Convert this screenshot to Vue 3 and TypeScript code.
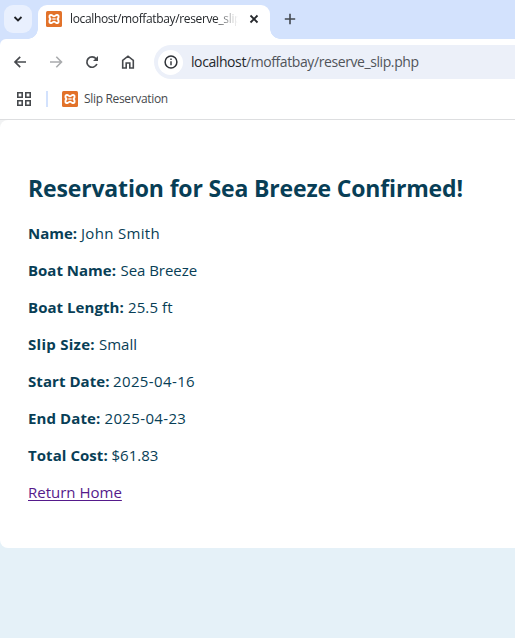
<script setup lang="ts">
interface Detail {
  label: string
  value: string
  labelWidth: number
  labelTracking: number
  valueTracking: number
}

const details: Detail[] = [
  { label: 'Name:', value: 'John Smith', labelWidth: 53, labelTracking: 0, valueTracking: 0.32 },
  { label: 'Boat Name:', value: 'Sea Breeze', labelWidth: 92.5, labelTracking: 0, valueTracking: -0.05 },
  { label: 'Boat Length:', value: '25.5 ft', labelWidth: 100, labelTracking: 0.05, valueTracking: 0.1 },
  { label: 'Slip Size:', value: 'Small', labelWidth: 71, labelTracking: 0.28, valueTracking: 0 },
  { label: 'Start Date:', value: '2025-04-16', labelWidth: 85, labelTracking: 0.06, valueTracking: 0.38 },
  { label: 'End Date:', value: '2025-04-23', labelWidth: 76.5, labelTracking: 0.1, valueTracking: 0.35 },
  { label: 'Total Cost:', value: '$61.83', labelWidth: 83.5, labelTracking: 0.06, valueTracking: 0 },
]
</script>

<template>
  <div class="window">
    <header class="tabs">
      <button class="search" aria-label="Search tabs">
        <svg width="10" height="8" viewBox="0 0 10 8"><path d="M1.500 2l3.500 3.500L8.500 2" fill="none" stroke="#202226" stroke-width="1.800" /></svg>
      </button>
      <div class="tab">
        <svg class="fav" viewBox="0 0 16 16"><rect width="16" height="16" rx="1.500" fill="#e2722a" /><path d="M5.800 4.100C3.100 3.200 2.700 6.300 4.500 8C2.700 9.700 3.100 12.800 5.800 11.900C7 11.500 7 10.600 8 10.600S9 11.500 10.200 11.900C12.900 12.800 13.300 9.700 11.500 8C13.300 6.300 12.900 3.200 10.200 4.100C9 4.500 9 5.400 8 5.400S7 4.500 5.800 4.100Z" fill="none" stroke="#fff" stroke-width="1.900" stroke-linejoin="round" /><path d="M6.300 8h3.400" stroke="#fff" stroke-width="1.300" /></svg>
        <span class="tab-title">localhost/moffatbay/reserve_slip</span>
        <svg class="close" viewBox="0 0 10 10"><path d="M1.500 1.500l7 7M8.500 1.500l-7 7" stroke="#25282c" stroke-width="1.800" /></svg>
      </div>
      <svg class="plus" viewBox="0 0 12 12"><path d="M6 .8v10.400M.8 6h10.400" stroke="#43484f" stroke-width="1.600" /></svg>
    </header>

    <nav class="toolbar">
      <svg class="nav" viewBox="0 0 16 16"><path d="M14 8H3M8.200 2.800L3 8L8.200 13.200" fill="none" stroke="#46494d" stroke-width="1.700" /></svg>
      <svg class="nav" viewBox="0 0 16 16"><path d="M2 8h11.300M8.300 2.800L13.500 8L8.300 13.200" fill="none" stroke="#a9abad" stroke-width="1.600" /></svg>
      <svg class="nav" viewBox="0 0 16 16"><path d="M12.900 10a5.200 5.200 0 1 1-.8-5.300L13.200 6" fill="none" stroke="#46494d" stroke-width="1.700" /><path d="M14 2v5H9z" fill="#46494d" /></svg>
      <svg class="nav" viewBox="0 0 16 16"><path d="M2.700 14V6.300L8 2.200l5.300 4.100V14H9.800V9H6.200v5z" fill="none" stroke="#46494d" stroke-width="1.600" /></svg>
      <div class="address">
        <span class="info">
          <svg width="14" height="14" viewBox="0 0 14 14"><circle cx="7" cy="7" r="5.900" fill="none" stroke="#303338" stroke-width="1.500" /><path d="M7 6.300v4M7 3.500v1.500" stroke="#303338" stroke-width="1.400" /></svg>
        </span>
        <span class="url"><b>localhost</b>/moffatbay/reserve_slip.php</span>
      </div>
    </nav>

    <div class="bookmarks">
      <svg class="apps" viewBox="0 0 14 14"><path d="M.8.8h4.400v4.400H.8zM8.800.8h4.400v4.400H8.800zM.8 8.800h4.400v4.400H.8zM8.800 8.800h4.400v4.400H8.800z" fill="none" stroke="#46494d" stroke-width="1.600" /></svg>
      <i class="divider"></i>
      <svg class="fav" viewBox="0 0 16 16"><rect width="16" height="16" rx="1.500" fill="#e2722a" /><path d="M5.800 4.100C3.100 3.200 2.700 6.300 4.500 8C2.700 9.700 3.100 12.800 5.800 11.900C7 11.500 7 10.600 8 10.600S9 11.500 10.200 11.900C12.900 12.800 13.300 9.700 11.500 8C13.300 6.300 12.900 3.200 10.200 4.100C9 4.500 9 5.400 8 5.400S7 4.500 5.800 4.100Z" fill="none" stroke="#fff" stroke-width="1.900" stroke-linejoin="round" /><path d="M6.300 8h3.400" stroke="#fff" stroke-width="1.300" /></svg>
      <span class="bookmark">Slip Reservation</span>
    </div>

    <main class="page">
      <section class="card">
        <h2>Reservation for Sea Breeze Confirmed!</h2>
        <p v-for="d in details" :key="d.label">
          <strong :style="{ width: d.labelWidth + 'px', letterSpacing: d.labelTracking + 'px' }">{{ d.label }}</strong><span :style="{ letterSpacing: d.valueTracking + 'px' }">{{ d.value }}</span>
        </p>
        <a href="#">Return Home</a>
      </section>
    </main>
  </div>
</template>

<style>
body { background: #e5f1f8; overflow: hidden; }
</style>

<style scoped>
.window { height: 638px; display: flex; flex-direction: column; overflow: hidden; background: #d3e2fd; font-family: "Open Sans", "Noto Sans", sans-serif; }
svg { display: block; flex: none; }
.tabs { height: 39px; flex: none; display: flex; }
.search { width: 28px; height: 28px; margin: 5px 6px 0 4px; padding: 0; border: 0; border-radius: 9px; background: #e9f0fe; display: flex; align-items: center; justify-content: center; flex: none; }
.tab { position: relative; box-sizing: border-box; width: 232px; height: 34px; margin-top: 5px; padding: 0 0 6px 8px; border-radius: 9px 9px 0 0; background: #fff; display: flex; align-items: center; flex: none; }
.tab::before, .tab::after { content: ""; position: absolute; bottom: 0; width: 10px; height: 10px; }
.tab::before { left: -10px; background: radial-gradient(circle at 0 0, transparent 9.5px, #fff 10px); }
.tab::after { right: -10px; background: radial-gradient(circle at 100% 0, transparent 9.5px, #fff 10px); }
.fav { width: 16px; height: 16px; }
.tab-title { width: 171px; margin-left: 8px; white-space: nowrap; font-size: 12px; line-height: 18px; letter-spacing: -.36px; color: #25282c; -webkit-mask-image: linear-gradient(90deg, #000 145px, transparent 168px); mask-image: linear-gradient(90deg, #000 145px, transparent 168px); }
.close { width: 10px; height: 10px; margin-left: 8px; }
.plus { width: 12px; height: 12px; margin: 13px 0 0 14px; }
.toolbar { height: 46px; flex: none; display: flex; align-items: center; gap: 20px; padding-left: 12px; background: #fff; border-top-left-radius: 6px; }
.nav { width: 16px; height: 16px; }
.address { height: 34px; flex: 1; margin-left: -2px; display: flex; align-items: center; border-radius: 17px 0 0 17px; background: #ecf0f9; min-width: 0; }
.info { width: 25px; height: 25px; margin-left: 4px; border-radius: 50%; background: #fff; display: flex; align-items: center; justify-content: center; }
.url { margin-left: 8px; font-size: 14px; line-height: 18px; letter-spacing: -.41px; color: #50545a; white-space: nowrap; }
.url b { font-weight: 400; color: #25282c; }
.bookmarks { height: 35px; flex: none; display: flex; align-items: center; padding: 0 0 6px 17px; box-sizing: border-box; background: #fff; border-bottom: 1px solid #dddee0; }
.apps { width: 14px; height: 14px; }
.divider { width: 2px; height: 16px; margin: 0 14px 0 15px; background: #d3e2fd; }
.bookmark { margin-left: 6px; font-size: 12px; line-height: 16px; letter-spacing: -.33px; color: #46494d; white-space: nowrap; }
.page { flex: 1; background: linear-gradient(#f1f2f3 12px, #e5f1f8 12px); }
.card { box-sizing: border-box; height: 428px; padding: 52px 28px 0; border-radius: 8px 0 0 8px; background: #fff; color: #083e56; font-size: 15px; line-height: 21px; }
h2 { margin: 0 0 19px; font-size: 23px; line-height: 32px; font-weight: 700; letter-spacing: -.16px; white-space: nowrap; }
p { margin: 0 0 16px; display: flex; white-space: nowrap; }
strong { flex: none; font-weight: 700; }
a { color: #551a8b; text-decoration: underline; text-underline-offset: 2px; text-decoration-thickness: 1px; }
</style>
